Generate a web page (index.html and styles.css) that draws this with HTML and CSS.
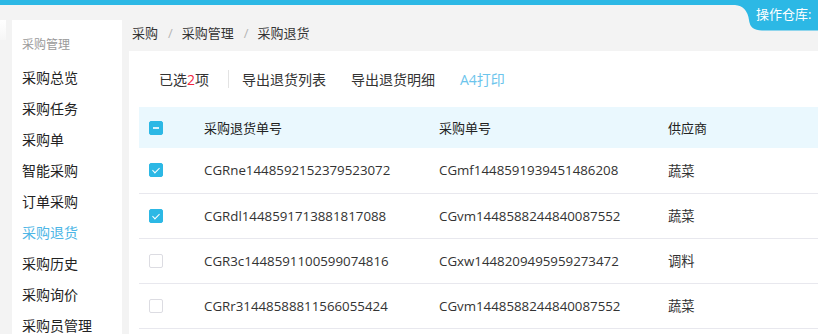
FILE: index.html
```html
<!DOCTYPE html>
<html lang="zh-CN">
<head>
<meta charset="utf-8">
<title>采购退货</title>
<link rel="stylesheet" href="styles.css">
</head>
<body>
<header class="topbar">
  <div class="warehouse">
    <svg class="warehouse-bg" width="90" height="31" viewBox="0 0 90 31"><path d="M0 0 H90 V30.5 H34 Q22 30.5 21 20 Q19 6 7 5 H0 Z" fill="#2cb8e5"/></svg>
    <span class="warehouse-label">操作仓库:</span>
  </div>
</header>
<div class="main">
  <div class="edge"></div>
  <aside class="sidebar">
    <div class="side-title">采购管理</div>
    <ul class="menu">
      <li>采购总览</li>
      <li>采购任务</li>
      <li>采购单</li>
      <li>智能采购</li>
      <li>订单采购</li>
      <li class="active">采购退货</li>
      <li>采购历史</li>
      <li>采购询价</li>
      <li>采购员管理</li>
    </ul>
  </aside>
  <section class="content">
    <nav class="crumbs">
      <span>采购</span><span class="sep">/</span><span>采购管理</span><span class="sep">/</span><span>采购退货</span>
    </nav>
    <div class="panel">
      <div class="toolbar">
        <span class="selected">已选<em>2</em>项</span>
        <span class="divider"></span>
        <span class="action">导出退货列表</span>
        <span class="action">导出退货明细</span>
        <span class="action link">A4打印</span>
      </div>
      <table class="grid">
        <colgroup><col class="c-check"><col class="c-ret"><col class="c-po"><col></colgroup>
        <thead>
          <tr><th><span class="cb on minus"></span></th><th>采购退货单号</th><th>采购单号</th><th>供应商</th></tr>
        </thead>
        <tbody>
          <tr><td><span class="cb on check"></span></td><td>CGRne1448592152379523072</td><td>CGmf1448591939451486208</td><td>蔬菜</td></tr>
          <tr><td><span class="cb on check"></span></td><td>CGRdl1448591713881817088</td><td>CGvm1448588244840087552</td><td>蔬菜</td></tr>
          <tr><td><span class="cb"></span></td><td>CGR3c1448591100599074816</td><td>CGxw1448209495959273472</td><td>调料</td></tr>
          <tr><td><span class="cb"></span></td><td>CGRr31448588811566055424</td><td>CGvm1448588244840087552</td><td>蔬菜</td></tr>
        </tbody>
      </table>
    </div>
  </section>
</div>
</body>
</html>
```
FILE: styles.css
```css
* { box-sizing: border-box; }
html, body { margin: 0; padding: 0; }
body {
  background: #f3f3f3;
  font-family: "Open Sans", "Noto Sans CJK SC", sans-serif;
  color: #333;
  font-size: 13px;
  width: 818px;
  height: 334px;
  overflow: hidden;
}
.topbar {
  position: relative;
  height: 5px;
  background: #2cb8e5;
}
.warehouse {
  position: absolute;
  top: 0;
  right: 0;
  width: 90px;
  height: 31px;
}
.warehouse-bg { display: block; }
.warehouse-label {
  position: absolute;
  left: 28px;
  top: 4px;
  color: #fff;
  font-size: 13px;
  line-height: 20px;
  white-space: nowrap;
}
.main {
  display: flex;
  padding-top: 15px;
  height: 329px;
}
.edge {
  width: 6px;
  height: 20px;
  background: linear-gradient(#ffffff, #f6f6f6);
  margin-right: 6px;
  flex: none;
}
.sidebar {
  width: 110px;
  flex: none;
  background: #fff;
  padding-left: 10px;
}
.side-title {
  padding-top: 15px;
  padding-bottom: 7px;
  line-height: 20px;
  font-size: 12px;
  color: #9a9a9a;
}
.menu {
  list-style: none;
  margin: 0;
  padding: 0;
}
.menu li {
  line-height: 31px;
  font-size: 14px;
  color: #222;
  white-space: nowrap;
}
.menu li.active { color: #4db6e6; }
.content {
  flex: 1;
  margin-left: 7px;
  display: flex;
  flex-direction: column;
  min-width: 0;
}
.crumbs {
  height: 31px;
  line-height: 26px;
  padding-left: 3px;
  font-size: 13px;
  color: #333;
  white-space: nowrap;
}
.crumbs .sep {
  color: #b5b5b5;
  padding: 0 9px 0 10px;
}
.panel {
  flex: 1;
  background: #fff;
  padding-left: 10px;
}
.toolbar {
  height: 56px;
  display: flex;
  align-items: center;
  padding-left: 20px;
  padding-bottom: 1px;
  font-size: 14px;
  white-space: nowrap;
}
.toolbar em {
  font-style: normal;
  color: #f0243c;
}
.divider {
  width: 1px;
  height: 18px;
  background: #e3e3e3;
  margin: 0 13px 0 19px;
}
.action { margin-right: 25px; color: #333; }
.action.link { color: #6cc4ec; }
.grid {
  border-collapse: collapse;
  table-layout: fixed;
  width: 690px;
}
.c-check { width: 65px; }
.c-ret { width: 235px; }
.c-po { width: 229px; }
.grid thead tr {
  background: #eaf8fe;
  height: 41px;
}
.grid th {
  font-weight: normal;
  text-align: left;
  padding: 0;
  font-size: 13px;
  color: #222;
}
.grid tbody tr {
  height: 45px;
  border-bottom: 1px solid #e8e8ee;
}
.grid td {
  padding: 0;
  font-size: 13.3px;
  color: #333;
  white-space: nowrap;
}
.grid th:first-child, .grid td:first-child { padding-left: 10px; }
.cb {
  display: block;
  width: 14px;
  height: 14px;
  border: 1px solid #dcdce2;
  border-radius: 2px;
  background: #fff;
  position: relative;
}
.cb.on {
  background: #2cb8e5;
  border-color: #2cb8e5;
}
.cb.minus::after {
  content: "";
  position: absolute;
  left: 3px;
  top: 5px;
  width: 6px;
  height: 2px;
  background: #d6f1fb;
}
.cb.check::after {
  content: "";
  position: absolute;
  left: 4px;
  top: 2px;
  width: 3px;
  height: 6px;
  border: solid #fff;
  border-width: 0 1.5px 1.5px 0;
  transform: rotate(45deg);
}
```
